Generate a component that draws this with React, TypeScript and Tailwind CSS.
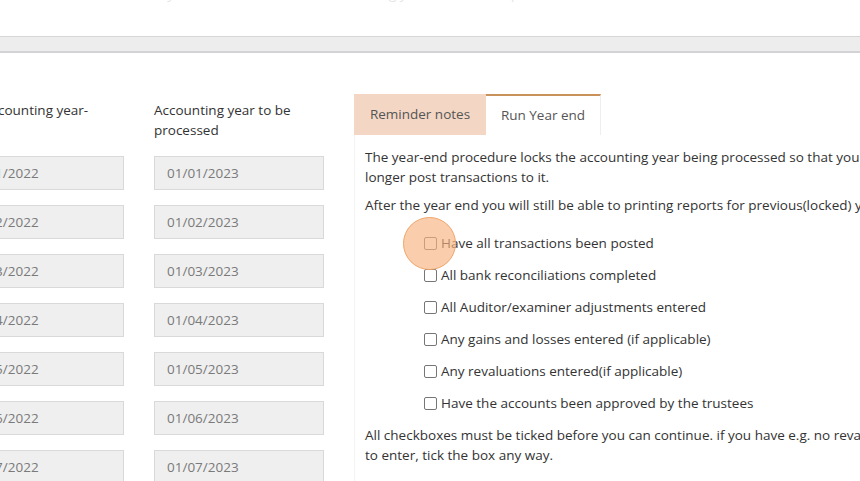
import React from "react";

const previous = ["01/01/2022", "01/02/2022", "01/03/2022", "01/04/2022", "01/05/2022", "01/06/2022", "01/07/2022"];
const processed = ["01/01/2023", "01/02/2023", "01/03/2023", "01/04/2023", "01/05/2023", "01/06/2023", "01/07/2023"];

const checks = [
  "Have all transactions been posted",
  "All bank reconciliations completed",
  "All Auditor/examiner adjustments entered",
  "Any gains and losses entered (if applicable)",
  "Any revaluations entered(if applicable)",
  "Have the accounts been approved by the trustees",
];

function DateField({ value }: { value: string }) {
  return (
    <div className="mb-[15px] flex h-[34px] w-[170px] items-center border border-[#d9d9d9] bg-[#efefef] pl-[12px] text-[13.5px] text-[#7a7a7a]">
      {value}
    </div>
  );
}

export default function App() {
  return (
    <div
      className="relative h-[481px] w-[860px] overflow-hidden bg-white text-[#333]"
      style={{ fontFamily: '"Open Sans", "Noto Sans", sans-serif' }}
    >
      {/* clipped line of text above the fold */}
      <div className="h-[36px] overflow-hidden">
        <div className="-mt-[16px] whitespace-nowrap text-[13.5px] leading-[20px] text-[#e4e4e4]">
          <span className="pl-[2px]">Use this screen to run the year end for the selected accounting year and lock the period</span>
        </div>
      </div>

      <div className="h-[17px] border-t border-b-2 border-t-[#d6d6d6] border-b-[#d3d3d7] bg-[#ededed]" />

      <div className="flex pt-[47px]">
        <div className="-ml-[46px] flex w-[170px] flex-col">
          <div className="mb-[16px] h-[40px] pl-[29px] text-[13.5px] leading-[20px]">Accounting year-</div>
          {previous.map((d) => (
            <DateField key={d} value={d} />
          ))}
        </div>

        <div className="ml-[30px] flex w-[170px] flex-col">
          <div className="mb-[16px] h-[40px] text-[13.5px] leading-[20px]">
            Accounting year to be
            <br />
            processed
          </div>
          {processed.map((d) => (
            <DateField key={d} value={d} />
          ))}
        </div>

        <div className="-mt-[6px] ml-[30px] flex-1 whitespace-nowrap">
          <div className="flex h-[41px] text-[13.5px]">
            <div className="flex w-[132px] items-center justify-center bg-[#f3d7c4] text-[#555]">Reminder notes</div>
            <div className="flex w-[115px] items-center justify-center border-t-2 border-r border-t-[#c9925a] border-r-[#eeeeee] bg-white text-[#555]">
              Run Year end
            </div>
          </div>

          <div className="border-l border-[#f4f4f4] pb-[40px] pl-[10px] pt-[12px] text-[13.5px] leading-[20px]">
            <p>
              The year-end procedure locks the accounting year being processed so that you can no
              <br />
              longer post transactions to it.
            </p>
            <p className="mt-[8px]">After the year end you will still be able to printing reports for previous(locked) years.</p>

            <div className="mt-[18px] flex flex-col gap-[12px] pl-[59px]">
              {checks.map((c) => (
                <label key={c} className="flex h-[20px] items-center">
                  <span className="mr-[4px] h-[13px] w-[13px] rounded-[2px] border border-[#767676] bg-white" />
                  <span>{c}</span>
                </label>
              ))}
            </div>

            <p className="mt-[12px]">
              All checkboxes must be ticked before you can continue. if you have e.g. no revaluations
              <br />
              to enter, tick the box any way.
            </p>
          </div>
        </div>
      </div>

      {/* click highlight */}
      <div className="pointer-events-none absolute left-[403px] top-[217px] h-[53px] w-[53px] rounded-full border border-[#eea56a] bg-[#f7b47f]/65" />
    </div>
  );
}
